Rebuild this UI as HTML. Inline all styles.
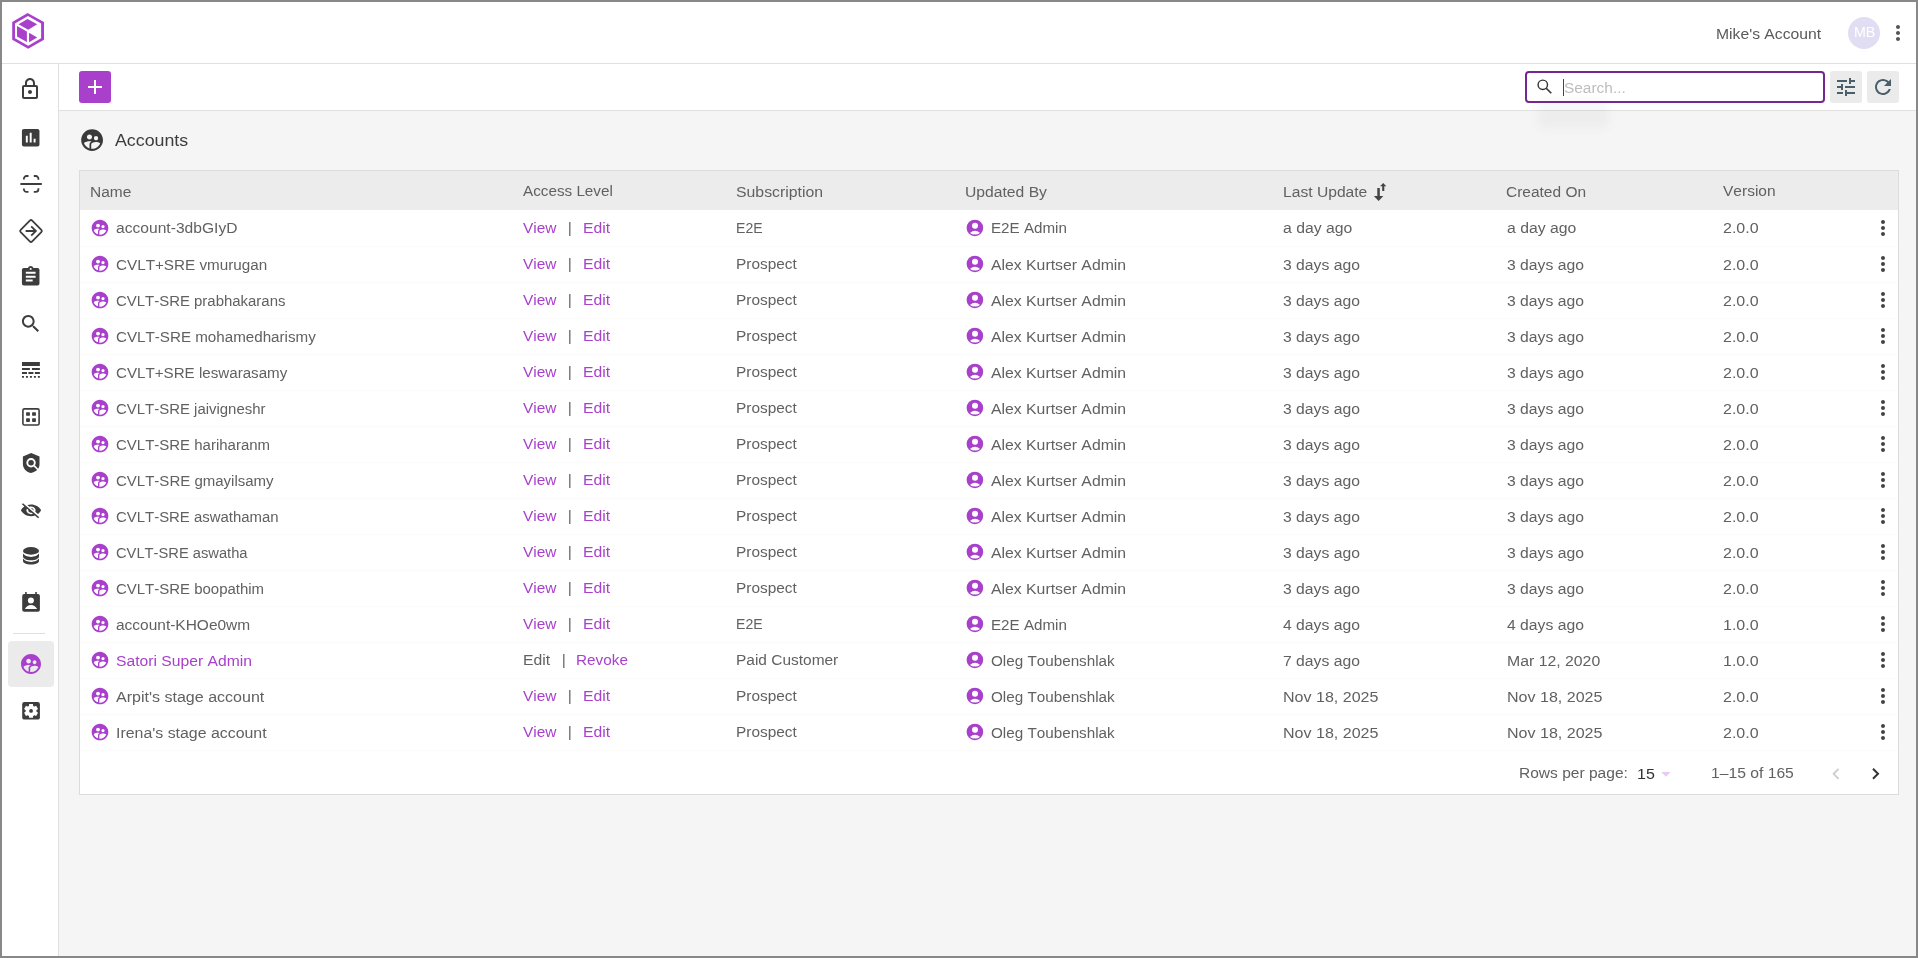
<!DOCTYPE html>
<html><head><meta charset="utf-8"><title>Accounts</title>
<style>
html,body{margin:0;padding:0;width:1918px;height:958px;overflow:hidden;background:#888;}
body{position:relative;font-family:"Liberation Sans",sans-serif;}
.box{position:absolute;}
.t{position:absolute;white-space:nowrap;transform-origin:0 0;will-change:transform;font-kerning:none;font-feature-settings:"kern" 0;}
.ic{position:absolute;overflow:visible;}
</style></head><body>
<div class="box" style="left:0;top:0;width:1918px;height:958px;background:#888"></div>
<div class="box" style="left:2px;top:2px;width:1914px;height:954px;background:#f5f5f5"></div>
<div class="box" style="left:2px;top:2px;width:1914px;height:61px;background:#fff"></div>
<div class="box" style="left:2px;top:63px;width:1914px;height:1px;background:#e0e0e0"></div>
<div class="box" style="left:2px;top:64px;width:56px;height:892px;background:#fff"></div>
<div class="box" style="left:58px;top:64px;width:1px;height:892px;background:#e0e0e0"></div>
<div class="box" style="left:59px;top:64px;width:1857px;height:46px;background:#fff"></div>
<div class="box" style="left:59px;top:110px;width:1857px;height:1px;background:#e0e0e0"></div>
<svg class="ic" style="left:8px;top:10px;width:40px;height:42px;" viewBox="8 10 40 42"><path fill="#a940cc" fill-rule="evenodd" d="M27.6 13.1 L44 22.1 L44 39.8 L28.2 48.8 L12.2 39.8 L12.2 22.1 Z M28 16.1 L41.1 23.6 L41.1 38.3 L28.2 45.7 L15 38.3 L15 23.6 Z"/><path fill="#a940cc" d="M18.5 24.3 L27.5 19 L37.2 24.3 L28.2 29.7 Z M17 26 L26.9 31.5 L26.9 42 L17 36.5 Z M29.05 32.8 L37.2 37.4 L29.05 42.2 Z"/></svg>
<div class="t" style="left:1716.00px;top:26.65px;font-size:14px;line-height:14px;color:#5a5a5a;transform:scaleX(1.1211);">Mike's Account</div>
<div class="box" style="left:1848px;top:17px;width:32px;height:32px;border-radius:50%;background:#e1def3"></div>
<div class="t" style="left:1853.60px;top:26.32px;font-size:13.8px;line-height:13.8px;color:#ffffff;transform:scaleX(1.0326);">MB</div>
<svg class="ic" style="left:1886px;top:21px;width:24px;height:24px;" viewBox="0 0 24 24"><path fill="#555" d="M12 8c1.1 0 2-.9 2-2s-.9-2-2-2-2 .9-2 2 .9 2 2 2zm0 2c-1.1 0-2 .9-2 2s.9 2 2 2 2-.9 2-2-.9-2-2-2zm0 6c-1.1 0-2 .9-2 2s.9 2 2 2 2-.9 2-2-.9-2-2-2z"/></svg>
<svg class="ic" style="left:18.2px;top:77.2px;width:24px;height:24px;" viewBox="0 0 24 24"><path fill="#3d3d3d" d="M18 8h-1V6c0-2.76-2.24-5-5-5S7 3.24 7 6v2H6c-1.1 0-2 .9-2 2v10c0 1.1.9 2 2 2h12c1.1 0 2-.9 2-2V10c0-1.1-.9-2-2-2zM9 6c0-1.66 1.34-3 3-3s3 1.34 3 3v2H9V6zm9 14H6V10h12v10zm-6-3c1.1 0 2-.9 2-2s-.9-2-2-2-2 .9-2 2 .9 2 2 2z"/></svg>
<svg class="ic" style="left:19.3px;top:126.3px;width:23.4px;height:23.4px;" viewBox="0 0 24 24"><path fill="#3d3d3d" d="M19 3H5c-1.1 0-2 .9-2 2v14c0 1.1.9 2 2 2h14c1.1 0 2-.9 2-2V5c0-1.1-.9-2-2-2zM9 17H7v-7h2v7zm4 0h-2V7h2v10zm4 0h-2v-4h2v4z"/></svg>
<svg class="ic" style="left:16px;top:170px;width:30px;height:30px;" viewBox="16 170 30 30"><g fill="none" stroke="#3d3d3d" stroke-width="1.8"><path d="M23.9 179.4 V178.6 a2.6 2.6 0 0 1 2.6 -2.6 H28.5"/><path d="M33.8 176 H35.8 a2.6 2.6 0 0 1 2.6 2.6 V179.8"/><path d="M23.9 188.5 V189.2 a2.6 2.6 0 0 0 2.6 2.6 H28.5"/><path d="M33.8 191.8 H35.8 a2.6 2.6 0 0 0 2.6 -2.6 V188.2"/></g><path d="M21.2 184 H41" stroke="#3d3d3d" stroke-width="2.1" stroke-linecap="round"/></svg>
<svg class="ic" style="left:16px;top:216px;width:30px;height:30px;" viewBox="16 216 30 30"><rect x="-8.15" y="-8.15" width="16.3" height="16.3" rx="1.7" fill="none" stroke="#3d3d3d" stroke-width="1.8" transform="translate(31 231) rotate(45)"/><g fill="none" stroke="#3d3d3d" stroke-width="1.8" stroke-linejoin="miter"><path d="M25.6 231 H35.4 M31.2 226.3 L35.9 231 L31.2 235.7"/></g></svg>
<svg class="ic" style="left:19.3px;top:265.2px;width:23.4px;height:23.4px;" viewBox="0 0 24 24"><path fill="#3d3d3d" d="M19 3h-4.18C14.4 1.84 13.3 1 12 1c-1.3 0-2.4.84-2.82 2H5c-1.1 0-2 .9-2 2v14c0 1.1.9 2 2 2h14c1.1 0 2-.9 2-2V5c0-1.1-.9-2-2-2zm-7 0c.55 0 1 .45 1 1s-.45 1-1 1-1-.45-1-1 .45-1 1-1zm2 14H7v-2h7v2zm3-4H7v-2h10v2zm0-4H7V7h10v2z"/></svg>
<svg class="ic" style="left:19.17px;top:312.1px;width:23.45px;height:23.45px;" viewBox="0 0 24 24"><path fill="#3d3d3d" d="M15.5 14h-.79l-.28-.27C15.41 12.59 16 11.11 16 9.5 16 5.91 13.09 3 9.5 3S3 5.91 3 9.5 5.91 16 9.5 16c1.61 0 3.09-.59 4.23-1.57l.27.28v.79l5 4.99L20.49 19l-4.99-5zm-6 0C7.01 14 5 11.99 5 9.5S7.01 5 9.5 5 14 7.01 14 9.5 11.99 14 9.5 14z"/></svg>
<svg class="ic" style="left:19.1px;top:358px;width:23.85px;height:23.85px;" viewBox="0 0 24 24"><path fill="#3d3d3d" d="M3 16h5v-2H3v2zm6.5 0h5v-2h-5v2zm6.5 0h5v-2h-5v2zM3 20h2v-2H3v2zm4 0h2v-2H7v2zm4 0h2v-2h-2v2zm4 0h2v-2h-2v2zm4 0h2v-2h-2v2zM3 12h8v-2H3v2zm10 0h8v-2h-8v2zM3 4v4h18V4H3z"/></svg>
<svg class="ic" style="left:16px;top:402px;width:30px;height:30px;" viewBox="16 402 30 30"><rect x="22.9" y="408.9" width="16.2" height="16.1" rx="1.6" fill="none" stroke="#3d3d3d" stroke-width="1.6"/><g fill="#3d3d3d"><rect x="26.1" y="412.2" width="3.8" height="3.6" rx=".6"/><rect x="32.1" y="412.2" width="3.8" height="3.6" rx=".6"/><rect x="26.1" y="418.2" width="3.8" height="3.7" rx=".6"/><rect x="32.1" y="418.2" width="3.8" height="3.7" rx=".6"/></g></svg>
<svg class="ic" style="left:16px;top:448px;width:30px;height:30px;" viewBox="16 448 30 30"><path fill="#3d3d3d" d="M31.2 453 L39.5 456.6 V464.5 C39.5 468.6 36 472 30.8 473 C25.8 472 22.9 468 22.9 464 V456.6 Z"/><circle cx="31.05" cy="462.75" r="3.75" fill="none" stroke="#fff" stroke-width="1.9"/><path d="M34 465.6 L38.6 470.2" stroke="#fff" stroke-width="1.6"/></svg>
<svg class="ic" style="left:19.98px;top:501.1px;width:22.03px;height:18.72px" viewBox="0 0 24 24" preserveAspectRatio="none"><path fill="#3d3d3d" d="M12 7c2.76 0 5 2.24 5 5 0 .65-.13 1.26-.36 1.83l2.92 2.92c1.51-1.26 2.7-2.89 3.43-4.75-1.730-4.39-6-7.5-11-7.5-1.4 0-2.74.25-3.98.7l2.160 2.16C10.74 7.13 11.35 7 12 7zM2 4.27l2.28 2.28.46.46C3.08 8.3 1.78 10.02 1 12c1.73 4.39 6 7.5 11 7.5 1.55 0 3.03-.3 4.38-.84l.42.42L19.73 22 21 20.73 3.27 3 2 4.27zM7.53 9.8l1.55 1.55c-.05.21-.08.43-.08.65 0 1.66 1.34 3 3 3 .22 0 .44-.03.65-.08l1.55 1.55c-.67.33-1.41.53-2.2.53-2.76 0-5-2.24-5-5 0-.79.2-1.53.53-2.2zm4.31-.78l3.15 3.15.02-.16c0-1.66-1.340-3-3-3l-.17.01z"/></svg>
<svg class="ic" style="left:16px;top:541px;width:30px;height:30px;" viewBox="16 541 30 30"><g fill="#3d3d3d"><ellipse cx="31" cy="550.9" rx="8" ry="3.8"/><path d="M23 553.6 C24.2 555.6 27.3 556.9 31 556.9 C34.7 556.9 37.8 555.6 39 553.6 V556.4 C39 558.4 35.4 560.2 31 560.2 C26.6 560.2 23 558.4 23 556.4 Z"/><path d="M23 558.6 C24.2 560.6 27.3 561.9 31 561.9 C34.7 561.9 37.8 560.6 39 558.6 V561 C39 563 35.4 564.6 31 564.6 C26.6 564.6 23 563 23 561 Z"/></g></svg>
<svg class="ic" style="left:16px;top:587px;width:30px;height:30px;" viewBox="16 587 30 30"><path fill="#3d3d3d" fill-rule="evenodd" d="M24.2 593.9 H37.9 A2 2 0 0 1 39.9 595.9 V609.7 A2 2 0 0 1 37.9 611.7 H24.2 A2 2 0 0 1 22.2 609.7 V595.9 A2 2 0 0 1 24.2 593.9 Z M24.9 609.1 H37.1 C36.1 606.5 33.8 604.9 31 604.9 C28.2 604.9 25.9 606.5 24.9 609.1 Z"/><rect x="25.1" y="592" width="1.6" height="2.5" fill="#3d3d3d"/><rect x="35.2" y="592" width="1.6" height="2.5" fill="#3d3d3d"/><circle cx="30.9" cy="600.4" r="3" fill="#fff"/></svg>
<div class="box" style="left:13px;top:633px;width:32px;height:1px;background:#e0e0e0"></div>
<div class="box" style="left:8px;top:641px;width:46px;height:46px;border-radius:4px;background:#ebebeb"></div>
<svg class="ic" style="left:19px;top:652px;width:24px;height:24px;" viewBox="0 0 24 24"><path fill="#a940cc" d="M12 2C6.48 2 2 6.48 2 12s4.48 10 10 10 10-4.48 10-10S17.52 2 12 2zm3.61 6.34c1.07 0 1.93.86 1.93 1.93 0 1.07-.86 1.93-1.93 1.93-1.07 0-1.93-.86-1.930-1.93-.01-1.07.86-1.93 1.93-1.93zm-6-1.58c1.3 0 2.36 1.06 2.36 2.36 0 1.3-1.06 2.36-2.36 2.36s-2.36-1.06-2.36-2.36c0-1.31 1.05-2.36 2.36-2.36zm0 9.13v3.75c-2.4-.75-4.3-2.6-5.14-4.96 1.05-1.12 3.670-1.69 5.14-1.69.53 0 1.2.08 1.9.22-1.64.87-1.9 2.02-1.9 2.68zM12 20c-.27 0-.53-.01-.79-.04v-4.07c0-1.42 2.94-2.13 4.4-2.13 1.07 0 2.92.39 3.84 1.15-1.17 2.92-4.01 5.09-7.450 5.09z"/></svg>
<svg class="ic" style="left:16px;top:696px;width:30px;height:30px;" viewBox="16 696 30 30"><rect x="22.2" y="702.1" width="17.7" height="17.5" rx="2.2" fill="#3d3d3d"/><g transform="translate(31.05 710.9)" fill="#fff"><circle r="5.4"/><path d="M-1.9 -6.95 H1.9 L2.2 -4 H-2.2 Z"/><path d="M-1.9 -6.95 H1.9 L2.2 -4 H-2.2 Z" transform="rotate(60)"/><path d="M-1.9 -6.95 H1.9 L2.2 -4 H-2.2 Z" transform="rotate(120)"/><path d="M-1.9 -6.95 H1.9 L2.2 -4 H-2.2 Z" transform="rotate(180)"/><path d="M-1.9 -6.95 H1.9 L2.2 -4 H-2.2 Z" transform="rotate(240)"/><path d="M-1.9 -6.95 H1.9 L2.2 -4 H-2.2 Z" transform="rotate(300)"/><circle r="1.9" fill="#3d3d3d"/></g></svg>
<div class="box" style="left:79px;top:71px;width:32px;height:32px;border-radius:3px;background:#a940cc"></div>
<div class="box" style="left:87.8px;top:86.1px;width:14px;height:1.8px;background:#fff"></div>
<div class="box" style="left:93.9px;top:80px;width:1.8px;height:14px;background:#fff"></div>
<div class="box" style="left:1525px;top:71px;width:300px;height:32px;box-sizing:border-box;border:2px solid #76278f;border-radius:4px;background:#fff"></div>
<svg class="ic" style="left:1530px;top:74px;width:30px;height:26px;" viewBox="1530 74 30 26"><circle cx="1542.8" cy="84.8" r="4.7" fill="none" stroke="#333" stroke-width="1.4"/><path d="M1546.2 88.2 L1551.3 93.3" stroke="#333" stroke-width="1.6"/></svg>
<div class="box" style="left:1563px;top:79px;width:1px;height:17px;background:#444"></div>
<div class="t" style="left:1564.00px;top:81.15px;font-size:14px;line-height:14px;color:#bdbdbd;transform:scaleX(1.1022);">Search...</div>
<div class="box" style="left:1538px;top:100px;width:70px;height:28px;background:rgba(0,0,0,0.03);filter:blur(5px)"></div>
<div class="box" style="left:1830px;top:71px;width:32px;height:32px;border-radius:3px;background:#ebebeb"></div>
<svg class="ic" style="left:1834px;top:75px;width:24px;height:24px;" viewBox="0 0 24 24"><path fill="#4a5f6a" d="M3 17v2h6v-2H3zM3 5v2h10V5H3zm10 16v-2h8v-2h-8v-2h-2v6h2zM7 9v2H3v2h4v2h2V9H7zm14 4v-2H11v2h10zm-6-4h2V7h4V5h-4V3h-2v6z"/></svg>
<div class="box" style="left:1867px;top:71px;width:32px;height:32px;border-radius:3px;background:#ebebeb"></div>
<svg class="ic" style="left:1871px;top:75px;width:24px;height:24px;" viewBox="0 0 24 24"><path fill="#4a5f6a" d="M17.65 6.35C16.2 4.9 14.21 4 12 4c-4.42 0-7.99 3.58-7.99 8s3.57 8 7.99 8c3.73 0 6.84-2.55 7.73-6h-2.08c-.82 2.33-3.04 4-5.65 4-3.31 0-6-2.69-6-6s2.69-6 6-6c1.66 0 3.14.69 4.22 1.78L13 11h7V4l-2.35 2.35z"/></svg>
<svg class="ic" style="left:78.8px;top:126.8px;width:26.2px;height:26.2px;" viewBox="0 0 24 24"><path fill="#3a3a3a" d="M12 2C6.48 2 2 6.48 2 12s4.48 10 10 10 10-4.48 10-10S17.52 2 12 2zm3.61 6.34c1.07 0 1.93.86 1.93 1.93 0 1.07-.86 1.93-1.93 1.93-1.07 0-1.93-.86-1.930-1.93-.01-1.07.86-1.93 1.93-1.93zm-6-1.58c1.3 0 2.36 1.06 2.36 2.36 0 1.3-1.06 2.36-2.36 2.36s-2.36-1.06-2.36-2.36c0-1.31 1.05-2.36 2.36-2.36zm0 9.13v3.75c-2.4-.75-4.3-2.6-5.14-4.96 1.05-1.12 3.670-1.69 5.14-1.69.53 0 1.2.08 1.9.22-1.64.87-1.9 2.02-1.9 2.68zM12 20c-.27 0-.53-.01-.79-.04v-4.07c0-1.42 2.94-2.13 4.4-2.13 1.07 0 2.92.39 3.84 1.15-1.17 2.92-4.01 5.09-7.450 5.09z"/></svg>
<div class="t" style="left:115.00px;top:133.46px;font-size:16px;line-height:16px;color:#3c3c3c;transform:scaleX(1.1125);">Accounts</div>
<div class="box" style="left:79px;top:170px;width:1820px;height:625px;box-sizing:border-box;border:1px solid #dcdcdc;background:#fff"></div>
<div class="box" style="left:80px;top:171px;width:1818px;height:39px;background:#ececec"></div>
<div class="t" style="left:89.60px;top:185.15px;font-size:14px;line-height:14px;color:#616161;transform:scaleX(1.1060);">Name</div>
<div class="t" style="left:523.00px;top:184.15px;font-size:14px;line-height:14px;color:#616161;transform:scaleX(1.0890);">Access Level</div>
<div class="t" style="left:735.50px;top:185.15px;font-size:14px;line-height:14px;color:#616161;transform:scaleX(1.1291);">Subscription</div>
<div class="t" style="left:964.50px;top:185.15px;font-size:14px;line-height:14px;color:#616161;transform:scaleX(1.1199);">Updated By</div>
<div class="t" style="left:1282.50px;top:185.15px;font-size:14px;line-height:14px;color:#616161;transform:scaleX(1.1168);">Last Update</div>
<div class="t" style="left:1506.00px;top:185.15px;font-size:14px;line-height:14px;color:#616161;transform:scaleX(1.1062);">Created On</div>
<div class="t" style="left:1723.00px;top:184.15px;font-size:14px;line-height:14px;color:#616161;transform:scaleX(1.1074);">Version</div>
<svg class="ic" style="left:1370px;top:180px;width:20px;height:24px;" viewBox="1370 180 20 24"><g fill="#444"><rect x="1377.3" y="188" width="2.5" height="8.5"/><path d="M1373.9 196 H1383.3 L1378.6 201 Z"/><rect x="1382.2" y="186" width="2.1" height="5"/><path d="M1380.1 186.3 H1386.3 L1383.2 183 Z"/></g></svg>
<div class="box" style="left:80px;top:246px;width:1818px;height:1px;background:#fafafa"></div>
<svg class="ic" style="left:89.9px;top:218px;width:20px;height:20px;" viewBox="0 0 24 24"><path fill="#a940cc" d="M12 2C6.48 2 2 6.48 2 12s4.48 10 10 10 10-4.48 10-10S17.52 2 12 2zm3.61 6.34c1.07 0 1.93.86 1.93 1.93 0 1.07-.86 1.93-1.93 1.93-1.07 0-1.93-.86-1.930-1.93-.01-1.07.86-1.93 1.93-1.93zm-6-1.58c1.3 0 2.36 1.06 2.36 2.36 0 1.3-1.06 2.36-2.36 2.36s-2.36-1.06-2.36-2.36c0-1.31 1.05-2.36 2.36-2.36zm0 9.13v3.75c-2.4-.75-4.3-2.6-5.14-4.96 1.05-1.12 3.670-1.69 5.14-1.69.53 0 1.2.08 1.9.22-1.64.87-1.9 2.02-1.9 2.68zM12 20c-.27 0-.53-.01-.79-.04v-4.07c0-1.42 2.94-2.13 4.4-2.13 1.07 0 2.92.39 3.84 1.15-1.17 2.92-4.01 5.09-7.450 5.09z"/></svg>
<div class="t" style="left:115.50px;top:221.15px;font-size:14px;line-height:14px;color:#616161;transform:scaleX(1.1157);">account-3dbGIyD</div>
<div class="t" style="left:523.20px;top:221.15px;font-size:14px;line-height:14px;color:#a940cc;transform:scaleX(1.1050);">View</div>
<div class="t" style="left:568.00px;top:221.15px;font-size:14px;line-height:14px;color:#555;transform:scaleX(1.0000);">|</div>
<div class="t" style="left:582.60px;top:221.15px;font-size:14px;line-height:14px;color:#a940cc;transform:scaleX(1.1238);">Edit</div>
<div class="t" style="left:735.50px;top:221.15px;font-size:14px;line-height:14px;color:#616161;transform:scaleX(1.0052);">E2E</div>
<svg class="ic" style="left:964px;top:218px;width:22px;height:22px" viewBox="964 218 22 22"><circle cx="974.9" cy="227.95" r="8.3" fill="#a940cc"/><circle cx="975" cy="225.8" r="3" fill="#fff"/><path d="M969.9 232.9 Q975 228.6 980.05 232.9 Q975 236.2 969.9 232.9 Z" fill="#fff"/></svg>
<div class="t" style="left:990.50px;top:221.15px;font-size:14px;line-height:14px;color:#616161;transform:scaleX(1.0839);">E2E Admin</div>
<div class="t" style="left:1282.50px;top:221.15px;font-size:14px;line-height:14px;color:#616161;transform:scaleX(1.1263);">a day ago</div>
<div class="t" style="left:1506.80px;top:221.15px;font-size:14px;line-height:14px;color:#616161;transform:scaleX(1.1263);">a day ago</div>
<div class="t" style="left:1722.50px;top:221.15px;font-size:14px;line-height:14px;color:#616161;transform:scaleX(1.1440);">2.0.0</div>
<svg class="ic" style="left:1871px;top:216px;width:24px;height:24px;" viewBox="0 0 24 24"><path fill="#444" d="M12 8c1.1 0 2-.9 2-2s-.9-2-2-2-2 .9-2 2 .9 2 2 2zm0 2c-1.1 0-2 .9-2 2s.9 2 2 2 2-.9 2-2-.9-2-2-2zm0 6c-1.1 0-2 .9-2 2s.9 2 2 2 2-.9 2-2-.9-2-2-2z"/></svg>
<div class="box" style="left:80px;top:282px;width:1818px;height:1px;background:#fafafa"></div>
<svg class="ic" style="left:89.9px;top:254px;width:20px;height:20px;" viewBox="0 0 24 24"><path fill="#a940cc" d="M12 2C6.48 2 2 6.48 2 12s4.48 10 10 10 10-4.48 10-10S17.52 2 12 2zm3.61 6.34c1.07 0 1.93.86 1.93 1.93 0 1.07-.86 1.93-1.93 1.93-1.07 0-1.93-.86-1.930-1.93-.01-1.07.86-1.93 1.93-1.93zm-6-1.58c1.3 0 2.36 1.06 2.36 2.36 0 1.3-1.06 2.36-2.36 2.36s-2.36-1.06-2.36-2.36c0-1.31 1.05-2.36 2.36-2.36zm0 9.13v3.75c-2.4-.75-4.3-2.6-5.14-4.96 1.05-1.12 3.670-1.69 5.14-1.69.53 0 1.2.08 1.9.22-1.64.87-1.9 2.02-1.9 2.68zM12 20c-.27 0-.53-.01-.79-.04v-4.07c0-1.42 2.94-2.13 4.4-2.13 1.07 0 2.92.39 3.84 1.15-1.17 2.92-4.01 5.09-7.450 5.09z"/></svg>
<div class="t" style="left:115.50px;top:258.15px;font-size:14px;line-height:14px;color:#616161;transform:scaleX(1.0880);">CVLT+SRE vmurugan</div>
<div class="t" style="left:523.20px;top:257.15px;font-size:14px;line-height:14px;color:#a940cc;transform:scaleX(1.1050);">View</div>
<div class="t" style="left:568.00px;top:257.15px;font-size:14px;line-height:14px;color:#555;transform:scaleX(1.0000);">|</div>
<div class="t" style="left:582.60px;top:257.15px;font-size:14px;line-height:14px;color:#a940cc;transform:scaleX(1.1238);">Edit</div>
<div class="t" style="left:735.50px;top:257.15px;font-size:14px;line-height:14px;color:#616161;transform:scaleX(1.0995);">Prospect</div>
<svg class="ic" style="left:964px;top:254px;width:22px;height:22px" viewBox="964 254 22 22"><circle cx="974.9" cy="263.95" r="8.3" fill="#a940cc"/><circle cx="975" cy="261.8" r="3" fill="#fff"/><path d="M969.9 268.9 Q975 264.6 980.05 268.9 Q975 272.2 969.9 268.9 Z" fill="#fff"/></svg>
<div class="t" style="left:990.50px;top:258.15px;font-size:14px;line-height:14px;color:#616161;transform:scaleX(1.1275);">Alex Kurtser Admin</div>
<div class="t" style="left:1282.50px;top:258.15px;font-size:14px;line-height:14px;color:#616161;transform:scaleX(1.1225);">3 days ago</div>
<div class="t" style="left:1506.80px;top:258.15px;font-size:14px;line-height:14px;color:#616161;transform:scaleX(1.1225);">3 days ago</div>
<div class="t" style="left:1722.50px;top:258.15px;font-size:14px;line-height:14px;color:#616161;transform:scaleX(1.1440);">2.0.0</div>
<svg class="ic" style="left:1871px;top:252px;width:24px;height:24px;" viewBox="0 0 24 24"><path fill="#444" d="M12 8c1.1 0 2-.9 2-2s-.9-2-2-2-2 .9-2 2 .9 2 2 2zm0 2c-1.1 0-2 .9-2 2s.9 2 2 2 2-.9 2-2-.9-2-2-2zm0 6c-1.1 0-2 .9-2 2s.9 2 2 2 2-.9 2-2-.9-2-2-2z"/></svg>
<div class="box" style="left:80px;top:318px;width:1818px;height:1px;background:#fafafa"></div>
<svg class="ic" style="left:89.9px;top:290px;width:20px;height:20px;" viewBox="0 0 24 24"><path fill="#a940cc" d="M12 2C6.48 2 2 6.48 2 12s4.48 10 10 10 10-4.48 10-10S17.52 2 12 2zm3.61 6.34c1.07 0 1.93.86 1.93 1.93 0 1.07-.86 1.93-1.93 1.93-1.07 0-1.93-.86-1.930-1.93-.01-1.07.86-1.93 1.93-1.93zm-6-1.58c1.3 0 2.36 1.06 2.36 2.36 0 1.3-1.06 2.36-2.36 2.36s-2.36-1.06-2.36-2.36c0-1.31 1.05-2.36 2.36-2.36zm0 9.13v3.75c-2.4-.75-4.3-2.6-5.14-4.96 1.05-1.12 3.670-1.69 5.14-1.69.53 0 1.2.08 1.9.22-1.64.87-1.9 2.02-1.9 2.68zM12 20c-.27 0-.53-.01-.79-.04v-4.07c0-1.42 2.94-2.13 4.4-2.13 1.07 0 2.92.39 3.84 1.15-1.17 2.92-4.01 5.09-7.450 5.09z"/></svg>
<div class="t" style="left:115.50px;top:294.15px;font-size:14px;line-height:14px;color:#616161;transform:scaleX(1.0673);">CVLT-SRE prabhakarans</div>
<div class="t" style="left:523.20px;top:293.15px;font-size:14px;line-height:14px;color:#a940cc;transform:scaleX(1.1050);">View</div>
<div class="t" style="left:568.00px;top:293.15px;font-size:14px;line-height:14px;color:#555;transform:scaleX(1.0000);">|</div>
<div class="t" style="left:582.60px;top:293.15px;font-size:14px;line-height:14px;color:#a940cc;transform:scaleX(1.1238);">Edit</div>
<div class="t" style="left:735.50px;top:293.15px;font-size:14px;line-height:14px;color:#616161;transform:scaleX(1.0995);">Prospect</div>
<svg class="ic" style="left:964px;top:290px;width:22px;height:22px" viewBox="964 290 22 22"><circle cx="974.9" cy="299.95" r="8.3" fill="#a940cc"/><circle cx="975" cy="297.8" r="3" fill="#fff"/><path d="M969.9 304.9 Q975 300.6 980.05 304.9 Q975 308.2 969.9 304.9 Z" fill="#fff"/></svg>
<div class="t" style="left:990.50px;top:294.15px;font-size:14px;line-height:14px;color:#616161;transform:scaleX(1.1275);">Alex Kurtser Admin</div>
<div class="t" style="left:1282.50px;top:294.15px;font-size:14px;line-height:14px;color:#616161;transform:scaleX(1.1225);">3 days ago</div>
<div class="t" style="left:1506.80px;top:294.15px;font-size:14px;line-height:14px;color:#616161;transform:scaleX(1.1225);">3 days ago</div>
<div class="t" style="left:1722.50px;top:294.15px;font-size:14px;line-height:14px;color:#616161;transform:scaleX(1.1440);">2.0.0</div>
<svg class="ic" style="left:1871px;top:288px;width:24px;height:24px;" viewBox="0 0 24 24"><path fill="#444" d="M12 8c1.1 0 2-.9 2-2s-.9-2-2-2-2 .9-2 2 .9 2 2 2zm0 2c-1.1 0-2 .9-2 2s.9 2 2 2 2-.9 2-2-.9-2-2-2zm0 6c-1.1 0-2 .9-2 2s.9 2 2 2 2-.9 2-2-.9-2-2-2z"/></svg>
<div class="box" style="left:80px;top:354px;width:1818px;height:1px;background:#fafafa"></div>
<svg class="ic" style="left:89.9px;top:326px;width:20px;height:20px;" viewBox="0 0 24 24"><path fill="#a940cc" d="M12 2C6.48 2 2 6.48 2 12s4.48 10 10 10 10-4.48 10-10S17.52 2 12 2zm3.61 6.34c1.07 0 1.93.86 1.93 1.93 0 1.07-.86 1.93-1.93 1.93-1.07 0-1.93-.86-1.930-1.93-.01-1.07.86-1.93 1.93-1.93zm-6-1.58c1.3 0 2.36 1.06 2.36 2.36 0 1.3-1.06 2.36-2.36 2.36s-2.36-1.06-2.36-2.36c0-1.31 1.05-2.36 2.36-2.36zm0 9.13v3.75c-2.4-.75-4.3-2.6-5.14-4.96 1.05-1.12 3.670-1.69 5.14-1.69.53 0 1.2.08 1.9.22-1.64.87-1.9 2.02-1.9 2.68zM12 20c-.27 0-.53-.01-.79-.04v-4.07c0-1.42 2.94-2.13 4.4-2.13 1.07 0 2.92.39 3.84 1.15-1.17 2.92-4.01 5.09-7.450 5.09z"/></svg>
<div class="t" style="left:115.50px;top:330.15px;font-size:14px;line-height:14px;color:#616161;transform:scaleX(1.0835);">CVLT-SRE mohamedharismy</div>
<div class="t" style="left:523.20px;top:329.15px;font-size:14px;line-height:14px;color:#a940cc;transform:scaleX(1.1050);">View</div>
<div class="t" style="left:568.00px;top:329.15px;font-size:14px;line-height:14px;color:#555;transform:scaleX(1.0000);">|</div>
<div class="t" style="left:582.60px;top:329.15px;font-size:14px;line-height:14px;color:#a940cc;transform:scaleX(1.1238);">Edit</div>
<div class="t" style="left:735.50px;top:329.15px;font-size:14px;line-height:14px;color:#616161;transform:scaleX(1.0995);">Prospect</div>
<svg class="ic" style="left:964px;top:326px;width:22px;height:22px" viewBox="964 326 22 22"><circle cx="974.9" cy="335.95" r="8.3" fill="#a940cc"/><circle cx="975" cy="333.8" r="3" fill="#fff"/><path d="M969.9 340.9 Q975 336.6 980.05 340.9 Q975 344.2 969.9 340.9 Z" fill="#fff"/></svg>
<div class="t" style="left:990.50px;top:330.15px;font-size:14px;line-height:14px;color:#616161;transform:scaleX(1.1275);">Alex Kurtser Admin</div>
<div class="t" style="left:1282.50px;top:330.15px;font-size:14px;line-height:14px;color:#616161;transform:scaleX(1.1225);">3 days ago</div>
<div class="t" style="left:1506.80px;top:330.15px;font-size:14px;line-height:14px;color:#616161;transform:scaleX(1.1225);">3 days ago</div>
<div class="t" style="left:1722.50px;top:330.15px;font-size:14px;line-height:14px;color:#616161;transform:scaleX(1.1440);">2.0.0</div>
<svg class="ic" style="left:1871px;top:324px;width:24px;height:24px;" viewBox="0 0 24 24"><path fill="#444" d="M12 8c1.1 0 2-.9 2-2s-.9-2-2-2-2 .9-2 2 .9 2 2 2zm0 2c-1.1 0-2 .9-2 2s.9 2 2 2 2-.9 2-2-.9-2-2-2zm0 6c-1.1 0-2 .9-2 2s.9 2 2 2 2-.9 2-2-.9-2-2-2z"/></svg>
<div class="box" style="left:80px;top:390px;width:1818px;height:1px;background:#fafafa"></div>
<svg class="ic" style="left:89.9px;top:362px;width:20px;height:20px;" viewBox="0 0 24 24"><path fill="#a940cc" d="M12 2C6.48 2 2 6.48 2 12s4.48 10 10 10 10-4.48 10-10S17.52 2 12 2zm3.61 6.34c1.07 0 1.93.86 1.93 1.93 0 1.07-.86 1.93-1.93 1.93-1.07 0-1.93-.86-1.930-1.93-.01-1.07.86-1.93 1.93-1.93zm-6-1.58c1.3 0 2.36 1.06 2.36 2.36 0 1.3-1.06 2.36-2.36 2.36s-2.36-1.06-2.36-2.36c0-1.31 1.05-2.36 2.36-2.36zm0 9.13v3.75c-2.4-.75-4.3-2.6-5.14-4.96 1.05-1.12 3.670-1.69 5.14-1.69.53 0 1.2.08 1.9.22-1.64.87-1.9 2.02-1.9 2.68zM12 20c-.27 0-.53-.01-.79-.04v-4.07c0-1.42 2.94-2.13 4.4-2.13 1.07 0 2.92.39 3.84 1.15-1.17 2.92-4.01 5.09-7.450 5.09z"/></svg>
<div class="t" style="left:115.50px;top:366.15px;font-size:14px;line-height:14px;color:#616161;transform:scaleX(1.0819);">CVLT+SRE leswarasamy</div>
<div class="t" style="left:523.20px;top:365.15px;font-size:14px;line-height:14px;color:#a940cc;transform:scaleX(1.1050);">View</div>
<div class="t" style="left:568.00px;top:365.15px;font-size:14px;line-height:14px;color:#555;transform:scaleX(1.0000);">|</div>
<div class="t" style="left:582.60px;top:365.15px;font-size:14px;line-height:14px;color:#a940cc;transform:scaleX(1.1238);">Edit</div>
<div class="t" style="left:735.50px;top:365.15px;font-size:14px;line-height:14px;color:#616161;transform:scaleX(1.0995);">Prospect</div>
<svg class="ic" style="left:964px;top:362px;width:22px;height:22px" viewBox="964 362 22 22"><circle cx="974.9" cy="371.95" r="8.3" fill="#a940cc"/><circle cx="975" cy="369.8" r="3" fill="#fff"/><path d="M969.9 376.9 Q975 372.6 980.05 376.9 Q975 380.2 969.9 376.9 Z" fill="#fff"/></svg>
<div class="t" style="left:990.50px;top:366.15px;font-size:14px;line-height:14px;color:#616161;transform:scaleX(1.1275);">Alex Kurtser Admin</div>
<div class="t" style="left:1282.50px;top:366.15px;font-size:14px;line-height:14px;color:#616161;transform:scaleX(1.1225);">3 days ago</div>
<div class="t" style="left:1506.80px;top:366.15px;font-size:14px;line-height:14px;color:#616161;transform:scaleX(1.1225);">3 days ago</div>
<div class="t" style="left:1722.50px;top:366.15px;font-size:14px;line-height:14px;color:#616161;transform:scaleX(1.1440);">2.0.0</div>
<svg class="ic" style="left:1871px;top:360px;width:24px;height:24px;" viewBox="0 0 24 24"><path fill="#444" d="M12 8c1.1 0 2-.9 2-2s-.9-2-2-2-2 .9-2 2 .9 2 2 2zm0 2c-1.1 0-2 .9-2 2s.9 2 2 2 2-.9 2-2-.9-2-2-2zm0 6c-1.1 0-2 .9-2 2s.9 2 2 2 2-.9 2-2-.9-2-2-2z"/></svg>
<div class="box" style="left:80px;top:426px;width:1818px;height:1px;background:#fafafa"></div>
<svg class="ic" style="left:89.9px;top:398px;width:20px;height:20px;" viewBox="0 0 24 24"><path fill="#a940cc" d="M12 2C6.48 2 2 6.48 2 12s4.48 10 10 10 10-4.48 10-10S17.52 2 12 2zm3.61 6.34c1.07 0 1.93.86 1.93 1.93 0 1.07-.86 1.93-1.93 1.93-1.07 0-1.93-.86-1.930-1.93-.01-1.07.86-1.93 1.93-1.93zm-6-1.58c1.3 0 2.36 1.06 2.36 2.36 0 1.3-1.06 2.36-2.36 2.36s-2.36-1.06-2.36-2.36c0-1.31 1.05-2.36 2.36-2.36zm0 9.13v3.75c-2.4-.75-4.3-2.6-5.14-4.96 1.05-1.12 3.670-1.69 5.14-1.69.53 0 1.2.08 1.9.22-1.64.87-1.9 2.02-1.9 2.68zM12 20c-.27 0-.53-.01-.79-.04v-4.07c0-1.42 2.94-2.13 4.4-2.13 1.07 0 2.92.39 3.84 1.15-1.17 2.92-4.01 5.09-7.450 5.09z"/></svg>
<div class="t" style="left:115.50px;top:402.15px;font-size:14px;line-height:14px;color:#616161;transform:scaleX(1.0675);">CVLT-SRE jaivigneshr</div>
<div class="t" style="left:523.20px;top:401.15px;font-size:14px;line-height:14px;color:#a940cc;transform:scaleX(1.1050);">View</div>
<div class="t" style="left:568.00px;top:401.15px;font-size:14px;line-height:14px;color:#555;transform:scaleX(1.0000);">|</div>
<div class="t" style="left:582.60px;top:401.15px;font-size:14px;line-height:14px;color:#a940cc;transform:scaleX(1.1238);">Edit</div>
<div class="t" style="left:735.50px;top:401.15px;font-size:14px;line-height:14px;color:#616161;transform:scaleX(1.0995);">Prospect</div>
<svg class="ic" style="left:964px;top:398px;width:22px;height:22px" viewBox="964 398 22 22"><circle cx="974.9" cy="407.95" r="8.3" fill="#a940cc"/><circle cx="975" cy="405.8" r="3" fill="#fff"/><path d="M969.9 412.9 Q975 408.6 980.05 412.9 Q975 416.2 969.9 412.9 Z" fill="#fff"/></svg>
<div class="t" style="left:990.50px;top:402.15px;font-size:14px;line-height:14px;color:#616161;transform:scaleX(1.1275);">Alex Kurtser Admin</div>
<div class="t" style="left:1282.50px;top:402.15px;font-size:14px;line-height:14px;color:#616161;transform:scaleX(1.1225);">3 days ago</div>
<div class="t" style="left:1506.80px;top:402.15px;font-size:14px;line-height:14px;color:#616161;transform:scaleX(1.1225);">3 days ago</div>
<div class="t" style="left:1722.50px;top:402.15px;font-size:14px;line-height:14px;color:#616161;transform:scaleX(1.1440);">2.0.0</div>
<svg class="ic" style="left:1871px;top:396px;width:24px;height:24px;" viewBox="0 0 24 24"><path fill="#444" d="M12 8c1.1 0 2-.9 2-2s-.9-2-2-2-2 .9-2 2 .9 2 2 2zm0 2c-1.1 0-2 .9-2 2s.9 2 2 2 2-.9 2-2-.9-2-2-2zm0 6c-1.1 0-2 .9-2 2s.9 2 2 2 2-.9 2-2-.9-2-2-2z"/></svg>
<div class="box" style="left:80px;top:462px;width:1818px;height:1px;background:#fafafa"></div>
<svg class="ic" style="left:89.9px;top:434px;width:20px;height:20px;" viewBox="0 0 24 24"><path fill="#a940cc" d="M12 2C6.48 2 2 6.48 2 12s4.48 10 10 10 10-4.48 10-10S17.52 2 12 2zm3.61 6.34c1.07 0 1.93.86 1.93 1.93 0 1.07-.86 1.93-1.93 1.93-1.07 0-1.93-.86-1.930-1.93-.01-1.07.86-1.93 1.93-1.93zm-6-1.58c1.3 0 2.36 1.06 2.36 2.36 0 1.3-1.06 2.36-2.36 2.36s-2.36-1.06-2.36-2.36c0-1.31 1.05-2.36 2.36-2.36zm0 9.13v3.75c-2.4-.75-4.3-2.6-5.14-4.96 1.05-1.12 3.670-1.69 5.14-1.69.53 0 1.2.08 1.9.22-1.64.87-1.9 2.02-1.9 2.68zM12 20c-.27 0-.53-.01-.79-.04v-4.07c0-1.42 2.94-2.13 4.4-2.13 1.07 0 2.92.39 3.84 1.15-1.17 2.92-4.01 5.09-7.450 5.09z"/></svg>
<div class="t" style="left:115.50px;top:438.15px;font-size:14px;line-height:14px;color:#616161;transform:scaleX(1.0703);">CVLT-SRE hariharanm</div>
<div class="t" style="left:523.20px;top:437.15px;font-size:14px;line-height:14px;color:#a940cc;transform:scaleX(1.1050);">View</div>
<div class="t" style="left:568.00px;top:437.15px;font-size:14px;line-height:14px;color:#555;transform:scaleX(1.0000);">|</div>
<div class="t" style="left:582.60px;top:437.15px;font-size:14px;line-height:14px;color:#a940cc;transform:scaleX(1.1238);">Edit</div>
<div class="t" style="left:735.50px;top:437.15px;font-size:14px;line-height:14px;color:#616161;transform:scaleX(1.0995);">Prospect</div>
<svg class="ic" style="left:964px;top:434px;width:22px;height:22px" viewBox="964 434 22 22"><circle cx="974.9" cy="443.95" r="8.3" fill="#a940cc"/><circle cx="975" cy="441.8" r="3" fill="#fff"/><path d="M969.9 448.9 Q975 444.6 980.05 448.9 Q975 452.2 969.9 448.9 Z" fill="#fff"/></svg>
<div class="t" style="left:990.50px;top:438.15px;font-size:14px;line-height:14px;color:#616161;transform:scaleX(1.1275);">Alex Kurtser Admin</div>
<div class="t" style="left:1282.50px;top:438.15px;font-size:14px;line-height:14px;color:#616161;transform:scaleX(1.1225);">3 days ago</div>
<div class="t" style="left:1506.80px;top:438.15px;font-size:14px;line-height:14px;color:#616161;transform:scaleX(1.1225);">3 days ago</div>
<div class="t" style="left:1722.50px;top:438.15px;font-size:14px;line-height:14px;color:#616161;transform:scaleX(1.1440);">2.0.0</div>
<svg class="ic" style="left:1871px;top:432px;width:24px;height:24px;" viewBox="0 0 24 24"><path fill="#444" d="M12 8c1.1 0 2-.9 2-2s-.9-2-2-2-2 .9-2 2 .9 2 2 2zm0 2c-1.1 0-2 .9-2 2s.9 2 2 2 2-.9 2-2-.9-2-2-2zm0 6c-1.1 0-2 .9-2 2s.9 2 2 2 2-.9 2-2-.9-2-2-2z"/></svg>
<div class="box" style="left:80px;top:498px;width:1818px;height:1px;background:#fafafa"></div>
<svg class="ic" style="left:89.9px;top:470px;width:20px;height:20px;" viewBox="0 0 24 24"><path fill="#a940cc" d="M12 2C6.48 2 2 6.48 2 12s4.48 10 10 10 10-4.48 10-10S17.52 2 12 2zm3.61 6.34c1.07 0 1.93.86 1.93 1.93 0 1.07-.86 1.93-1.93 1.93-1.07 0-1.93-.86-1.930-1.93-.01-1.07.86-1.93 1.93-1.93zm-6-1.58c1.3 0 2.36 1.06 2.36 2.36 0 1.3-1.06 2.36-2.36 2.36s-2.36-1.06-2.36-2.36c0-1.31 1.05-2.36 2.36-2.36zm0 9.13v3.75c-2.4-.75-4.3-2.6-5.14-4.96 1.05-1.12 3.670-1.69 5.14-1.69.53 0 1.2.08 1.9.22-1.64.87-1.9 2.02-1.9 2.68zM12 20c-.27 0-.53-.01-.79-.04v-4.07c0-1.42 2.94-2.13 4.4-2.13 1.07 0 2.92.39 3.84 1.15-1.17 2.92-4.01 5.09-7.450 5.09z"/></svg>
<div class="t" style="left:115.50px;top:474.15px;font-size:14px;line-height:14px;color:#616161;transform:scaleX(1.0721);">CVLT-SRE gmayilsamy</div>
<div class="t" style="left:523.20px;top:473.15px;font-size:14px;line-height:14px;color:#a940cc;transform:scaleX(1.1050);">View</div>
<div class="t" style="left:568.00px;top:473.15px;font-size:14px;line-height:14px;color:#555;transform:scaleX(1.0000);">|</div>
<div class="t" style="left:582.60px;top:473.15px;font-size:14px;line-height:14px;color:#a940cc;transform:scaleX(1.1238);">Edit</div>
<div class="t" style="left:735.50px;top:473.15px;font-size:14px;line-height:14px;color:#616161;transform:scaleX(1.0995);">Prospect</div>
<svg class="ic" style="left:964px;top:470px;width:22px;height:22px" viewBox="964 470 22 22"><circle cx="974.9" cy="479.95" r="8.3" fill="#a940cc"/><circle cx="975" cy="477.8" r="3" fill="#fff"/><path d="M969.9 484.9 Q975 480.6 980.05 484.9 Q975 488.2 969.9 484.9 Z" fill="#fff"/></svg>
<div class="t" style="left:990.50px;top:474.15px;font-size:14px;line-height:14px;color:#616161;transform:scaleX(1.1275);">Alex Kurtser Admin</div>
<div class="t" style="left:1282.50px;top:474.15px;font-size:14px;line-height:14px;color:#616161;transform:scaleX(1.1225);">3 days ago</div>
<div class="t" style="left:1506.80px;top:474.15px;font-size:14px;line-height:14px;color:#616161;transform:scaleX(1.1225);">3 days ago</div>
<div class="t" style="left:1722.50px;top:474.15px;font-size:14px;line-height:14px;color:#616161;transform:scaleX(1.1440);">2.0.0</div>
<svg class="ic" style="left:1871px;top:468px;width:24px;height:24px;" viewBox="0 0 24 24"><path fill="#444" d="M12 8c1.1 0 2-.9 2-2s-.9-2-2-2-2 .9-2 2 .9 2 2 2zm0 2c-1.1 0-2 .9-2 2s.9 2 2 2 2-.9 2-2-.9-2-2-2zm0 6c-1.1 0-2 .9-2 2s.9 2 2 2 2-.9 2-2-.9-2-2-2z"/></svg>
<div class="box" style="left:80px;top:534px;width:1818px;height:1px;background:#fafafa"></div>
<svg class="ic" style="left:89.9px;top:506px;width:20px;height:20px;" viewBox="0 0 24 24"><path fill="#a940cc" d="M12 2C6.48 2 2 6.48 2 12s4.48 10 10 10 10-4.48 10-10S17.52 2 12 2zm3.61 6.34c1.07 0 1.93.86 1.93 1.93 0 1.07-.86 1.93-1.93 1.93-1.07 0-1.93-.86-1.930-1.93-.01-1.07.86-1.93 1.93-1.93zm-6-1.58c1.3 0 2.36 1.06 2.36 2.36 0 1.3-1.06 2.36-2.36 2.36s-2.36-1.06-2.36-2.36c0-1.31 1.05-2.36 2.36-2.36zm0 9.13v3.75c-2.4-.75-4.3-2.6-5.14-4.96 1.05-1.12 3.670-1.69 5.14-1.69.53 0 1.2.08 1.9.22-1.64.87-1.9 2.02-1.9 2.68zM12 20c-.27 0-.53-.01-.79-.04v-4.07c0-1.42 2.94-2.13 4.4-2.13 1.07 0 2.92.39 3.84 1.15-1.17 2.92-4.01 5.09-7.450 5.09z"/></svg>
<div class="t" style="left:115.50px;top:510.15px;font-size:14px;line-height:14px;color:#616161;transform:scaleX(1.0662);">CVLT-SRE aswathaman</div>
<div class="t" style="left:523.20px;top:509.15px;font-size:14px;line-height:14px;color:#a940cc;transform:scaleX(1.1050);">View</div>
<div class="t" style="left:568.00px;top:509.15px;font-size:14px;line-height:14px;color:#555;transform:scaleX(1.0000);">|</div>
<div class="t" style="left:582.60px;top:509.15px;font-size:14px;line-height:14px;color:#a940cc;transform:scaleX(1.1238);">Edit</div>
<div class="t" style="left:735.50px;top:509.15px;font-size:14px;line-height:14px;color:#616161;transform:scaleX(1.0995);">Prospect</div>
<svg class="ic" style="left:964px;top:506px;width:22px;height:22px" viewBox="964 506 22 22"><circle cx="974.9" cy="515.95" r="8.3" fill="#a940cc"/><circle cx="975" cy="513.8" r="3" fill="#fff"/><path d="M969.9 520.9 Q975 516.6 980.05 520.9 Q975 524.2 969.9 520.9 Z" fill="#fff"/></svg>
<div class="t" style="left:990.50px;top:510.15px;font-size:14px;line-height:14px;color:#616161;transform:scaleX(1.1275);">Alex Kurtser Admin</div>
<div class="t" style="left:1282.50px;top:510.15px;font-size:14px;line-height:14px;color:#616161;transform:scaleX(1.1225);">3 days ago</div>
<div class="t" style="left:1506.80px;top:510.15px;font-size:14px;line-height:14px;color:#616161;transform:scaleX(1.1225);">3 days ago</div>
<div class="t" style="left:1722.50px;top:510.15px;font-size:14px;line-height:14px;color:#616161;transform:scaleX(1.1440);">2.0.0</div>
<svg class="ic" style="left:1871px;top:504px;width:24px;height:24px;" viewBox="0 0 24 24"><path fill="#444" d="M12 8c1.1 0 2-.9 2-2s-.9-2-2-2-2 .9-2 2 .9 2 2 2zm0 2c-1.1 0-2 .9-2 2s.9 2 2 2 2-.9 2-2-.9-2-2-2zm0 6c-1.1 0-2 .9-2 2s.9 2 2 2 2-.9 2-2-.9-2-2-2z"/></svg>
<div class="box" style="left:80px;top:570px;width:1818px;height:1px;background:#fafafa"></div>
<svg class="ic" style="left:89.9px;top:542px;width:20px;height:20px;" viewBox="0 0 24 24"><path fill="#a940cc" d="M12 2C6.48 2 2 6.48 2 12s4.48 10 10 10 10-4.48 10-10S17.52 2 12 2zm3.61 6.34c1.07 0 1.93.86 1.93 1.93 0 1.07-.86 1.93-1.93 1.93-1.07 0-1.93-.86-1.930-1.93-.01-1.07.86-1.93 1.93-1.93zm-6-1.58c1.3 0 2.36 1.06 2.36 2.36 0 1.3-1.06 2.36-2.36 2.36s-2.36-1.06-2.36-2.36c0-1.31 1.05-2.36 2.36-2.36zm0 9.13v3.75c-2.4-.75-4.3-2.6-5.14-4.96 1.05-1.12 3.670-1.69 5.14-1.69.53 0 1.2.08 1.9.22-1.64.87-1.9 2.02-1.9 2.68zM12 20c-.27 0-.53-.01-.79-.04v-4.07c0-1.42 2.94-2.13 4.4-2.13 1.07 0 2.92.39 3.84 1.15-1.17 2.92-4.01 5.09-7.450 5.09z"/></svg>
<div class="t" style="left:115.50px;top:546.15px;font-size:14px;line-height:14px;color:#616161;transform:scaleX(1.0498);">CVLT-SRE aswatha</div>
<div class="t" style="left:523.20px;top:545.15px;font-size:14px;line-height:14px;color:#a940cc;transform:scaleX(1.1050);">View</div>
<div class="t" style="left:568.00px;top:545.15px;font-size:14px;line-height:14px;color:#555;transform:scaleX(1.0000);">|</div>
<div class="t" style="left:582.60px;top:545.15px;font-size:14px;line-height:14px;color:#a940cc;transform:scaleX(1.1238);">Edit</div>
<div class="t" style="left:735.50px;top:545.15px;font-size:14px;line-height:14px;color:#616161;transform:scaleX(1.0995);">Prospect</div>
<svg class="ic" style="left:964px;top:542px;width:22px;height:22px" viewBox="964 542 22 22"><circle cx="974.9" cy="551.95" r="8.3" fill="#a940cc"/><circle cx="975" cy="549.8" r="3" fill="#fff"/><path d="M969.9 556.9 Q975 552.6 980.05 556.9 Q975 560.2 969.9 556.9 Z" fill="#fff"/></svg>
<div class="t" style="left:990.50px;top:546.15px;font-size:14px;line-height:14px;color:#616161;transform:scaleX(1.1275);">Alex Kurtser Admin</div>
<div class="t" style="left:1282.50px;top:546.15px;font-size:14px;line-height:14px;color:#616161;transform:scaleX(1.1225);">3 days ago</div>
<div class="t" style="left:1506.80px;top:546.15px;font-size:14px;line-height:14px;color:#616161;transform:scaleX(1.1225);">3 days ago</div>
<div class="t" style="left:1722.50px;top:546.15px;font-size:14px;line-height:14px;color:#616161;transform:scaleX(1.1440);">2.0.0</div>
<svg class="ic" style="left:1871px;top:540px;width:24px;height:24px;" viewBox="0 0 24 24"><path fill="#444" d="M12 8c1.1 0 2-.9 2-2s-.9-2-2-2-2 .9-2 2 .9 2 2 2zm0 2c-1.1 0-2 .9-2 2s.9 2 2 2 2-.9 2-2-.9-2-2-2zm0 6c-1.1 0-2 .9-2 2s.9 2 2 2 2-.9 2-2-.9-2-2-2z"/></svg>
<div class="box" style="left:80px;top:606px;width:1818px;height:1px;background:#fafafa"></div>
<svg class="ic" style="left:89.9px;top:578px;width:20px;height:20px;" viewBox="0 0 24 24"><path fill="#a940cc" d="M12 2C6.48 2 2 6.48 2 12s4.48 10 10 10 10-4.48 10-10S17.52 2 12 2zm3.61 6.34c1.07 0 1.93.86 1.93 1.93 0 1.07-.86 1.93-1.93 1.93-1.07 0-1.93-.86-1.930-1.93-.01-1.07.86-1.93 1.93-1.93zm-6-1.58c1.3 0 2.36 1.06 2.36 2.36 0 1.3-1.06 2.36-2.36 2.36s-2.36-1.06-2.36-2.36c0-1.31 1.05-2.36 2.36-2.36zm0 9.13v3.75c-2.4-.75-4.3-2.6-5.14-4.96 1.05-1.12 3.670-1.69 5.14-1.69.53 0 1.2.08 1.9.22-1.64.87-1.9 2.02-1.9 2.68zM12 20c-.27 0-.53-.01-.79-.04v-4.07c0-1.42 2.94-2.13 4.4-2.13 1.07 0 2.92.39 3.84 1.15-1.17 2.92-4.01 5.09-7.450 5.09z"/></svg>
<div class="t" style="left:115.50px;top:582.15px;font-size:14px;line-height:14px;color:#616161;transform:scaleX(1.0689);">CVLT-SRE boopathim</div>
<div class="t" style="left:523.20px;top:581.15px;font-size:14px;line-height:14px;color:#a940cc;transform:scaleX(1.1050);">View</div>
<div class="t" style="left:568.00px;top:581.15px;font-size:14px;line-height:14px;color:#555;transform:scaleX(1.0000);">|</div>
<div class="t" style="left:582.60px;top:581.15px;font-size:14px;line-height:14px;color:#a940cc;transform:scaleX(1.1238);">Edit</div>
<div class="t" style="left:735.50px;top:581.15px;font-size:14px;line-height:14px;color:#616161;transform:scaleX(1.0995);">Prospect</div>
<svg class="ic" style="left:964px;top:578px;width:22px;height:22px" viewBox="964 578 22 22"><circle cx="974.9" cy="587.95" r="8.3" fill="#a940cc"/><circle cx="975" cy="585.8" r="3" fill="#fff"/><path d="M969.9 592.9 Q975 588.6 980.05 592.9 Q975 596.2 969.9 592.9 Z" fill="#fff"/></svg>
<div class="t" style="left:990.50px;top:582.15px;font-size:14px;line-height:14px;color:#616161;transform:scaleX(1.1275);">Alex Kurtser Admin</div>
<div class="t" style="left:1282.50px;top:582.15px;font-size:14px;line-height:14px;color:#616161;transform:scaleX(1.1225);">3 days ago</div>
<div class="t" style="left:1506.80px;top:582.15px;font-size:14px;line-height:14px;color:#616161;transform:scaleX(1.1225);">3 days ago</div>
<div class="t" style="left:1722.50px;top:582.15px;font-size:14px;line-height:14px;color:#616161;transform:scaleX(1.1440);">2.0.0</div>
<svg class="ic" style="left:1871px;top:576px;width:24px;height:24px;" viewBox="0 0 24 24"><path fill="#444" d="M12 8c1.1 0 2-.9 2-2s-.9-2-2-2-2 .9-2 2 .9 2 2 2zm0 2c-1.1 0-2 .9-2 2s.9 2 2 2 2-.9 2-2-.9-2-2-2zm0 6c-1.1 0-2 .9-2 2s.9 2 2 2 2-.9 2-2-.9-2-2-2z"/></svg>
<div class="box" style="left:80px;top:642px;width:1818px;height:1px;background:#fafafa"></div>
<svg class="ic" style="left:89.9px;top:614px;width:20px;height:20px;" viewBox="0 0 24 24"><path fill="#a940cc" d="M12 2C6.48 2 2 6.48 2 12s4.48 10 10 10 10-4.48 10-10S17.52 2 12 2zm3.61 6.34c1.07 0 1.93.86 1.93 1.93 0 1.07-.86 1.93-1.93 1.93-1.07 0-1.93-.86-1.930-1.93-.01-1.07.86-1.93 1.93-1.93zm-6-1.58c1.3 0 2.36 1.06 2.36 2.36 0 1.3-1.06 2.36-2.36 2.36s-2.36-1.06-2.36-2.36c0-1.31 1.05-2.36 2.36-2.36zm0 9.13v3.75c-2.4-.75-4.3-2.6-5.14-4.96 1.05-1.12 3.670-1.69 5.14-1.69.53 0 1.2.08 1.9.22-1.64.87-1.9 2.02-1.9 2.68zM12 20c-.27 0-.53-.01-.79-.04v-4.07c0-1.42 2.94-2.13 4.4-2.13 1.07 0 2.92.39 3.84 1.15-1.17 2.92-4.01 5.09-7.450 5.09z"/></svg>
<div class="t" style="left:115.50px;top:618.15px;font-size:14px;line-height:14px;color:#616161;transform:scaleX(1.1053);">account-KHOe0wm</div>
<div class="t" style="left:523.20px;top:617.15px;font-size:14px;line-height:14px;color:#a940cc;transform:scaleX(1.1050);">View</div>
<div class="t" style="left:568.00px;top:617.15px;font-size:14px;line-height:14px;color:#555;transform:scaleX(1.0000);">|</div>
<div class="t" style="left:582.60px;top:617.15px;font-size:14px;line-height:14px;color:#a940cc;transform:scaleX(1.1238);">Edit</div>
<div class="t" style="left:735.50px;top:617.15px;font-size:14px;line-height:14px;color:#616161;transform:scaleX(1.0052);">E2E</div>
<svg class="ic" style="left:964px;top:614px;width:22px;height:22px" viewBox="964 614 22 22"><circle cx="974.9" cy="623.95" r="8.3" fill="#a940cc"/><circle cx="975" cy="621.8" r="3" fill="#fff"/><path d="M969.9 628.9 Q975 624.6 980.05 628.9 Q975 632.2 969.9 628.9 Z" fill="#fff"/></svg>
<div class="t" style="left:990.50px;top:618.15px;font-size:14px;line-height:14px;color:#616161;transform:scaleX(1.0839);">E2E Admin</div>
<div class="t" style="left:1282.50px;top:618.15px;font-size:14px;line-height:14px;color:#616161;transform:scaleX(1.1225);">4 days ago</div>
<div class="t" style="left:1506.80px;top:618.15px;font-size:14px;line-height:14px;color:#616161;transform:scaleX(1.1225);">4 days ago</div>
<div class="t" style="left:1722.50px;top:618.15px;font-size:14px;line-height:14px;color:#616161;transform:scaleX(1.1440);">1.0.0</div>
<svg class="ic" style="left:1871px;top:612px;width:24px;height:24px;" viewBox="0 0 24 24"><path fill="#444" d="M12 8c1.1 0 2-.9 2-2s-.9-2-2-2-2 .9-2 2 .9 2 2 2zm0 2c-1.1 0-2 .9-2 2s.9 2 2 2 2-.9 2-2-.9-2-2-2zm0 6c-1.1 0-2 .9-2 2s.9 2 2 2 2-.9 2-2-.9-2-2-2z"/></svg>
<div class="box" style="left:80px;top:678px;width:1818px;height:1px;background:#fafafa"></div>
<svg class="ic" style="left:89.9px;top:650px;width:20px;height:20px;" viewBox="0 0 24 24"><path fill="#a940cc" d="M12 2C6.48 2 2 6.48 2 12s4.48 10 10 10 10-4.48 10-10S17.52 2 12 2zm3.61 6.34c1.07 0 1.93.86 1.93 1.93 0 1.07-.86 1.93-1.93 1.93-1.07 0-1.93-.86-1.930-1.93-.01-1.07.86-1.93 1.93-1.93zm-6-1.58c1.3 0 2.36 1.06 2.36 2.36 0 1.3-1.06 2.36-2.36 2.36s-2.36-1.06-2.36-2.36c0-1.31 1.05-2.36 2.36-2.36zm0 9.13v3.75c-2.4-.75-4.3-2.6-5.14-4.96 1.05-1.12 3.670-1.69 5.14-1.69.53 0 1.2.08 1.9.22-1.64.87-1.9 2.02-1.9 2.68zM12 20c-.27 0-.53-.01-.79-.04v-4.07c0-1.42 2.94-2.13 4.4-2.13 1.07 0 2.92.39 3.84 1.15-1.17 2.92-4.01 5.09-7.450 5.09z"/></svg>
<div class="t" style="left:115.50px;top:654.15px;font-size:14px;line-height:14px;color:#a940cc;transform:scaleX(1.1199);">Satori Super Admin</div>
<div class="t" style="left:523.40px;top:653.15px;font-size:14px;line-height:14px;color:#616161;transform:scaleX(1.1238);">Edit</div>
<div class="t" style="left:561.90px;top:653.15px;font-size:14px;line-height:14px;color:#555;transform:scaleX(1.0000);">|</div>
<div class="t" style="left:576.40px;top:653.15px;font-size:14px;line-height:14px;color:#a940cc;transform:scaleX(1.0936);">Revoke</div>
<div class="t" style="left:735.50px;top:653.15px;font-size:14px;line-height:14px;color:#616161;transform:scaleX(1.1043);">Paid Customer</div>
<svg class="ic" style="left:964px;top:650px;width:22px;height:22px" viewBox="964 650 22 22"><circle cx="974.9" cy="659.95" r="8.3" fill="#a940cc"/><circle cx="975" cy="657.8" r="3" fill="#fff"/><path d="M969.9 664.9 Q975 660.6 980.05 664.9 Q975 668.2 969.9 664.9 Z" fill="#fff"/></svg>
<div class="t" style="left:990.50px;top:654.15px;font-size:14px;line-height:14px;color:#616161;transform:scaleX(1.0886);">Oleg Toubenshlak</div>
<div class="t" style="left:1282.50px;top:654.15px;font-size:14px;line-height:14px;color:#616161;transform:scaleX(1.1225);">7 days ago</div>
<div class="t" style="left:1506.80px;top:654.15px;font-size:14px;line-height:14px;color:#616161;transform:scaleX(1.1298);">Mar 12, 2020</div>
<div class="t" style="left:1722.50px;top:654.15px;font-size:14px;line-height:14px;color:#616161;transform:scaleX(1.1440);">1.0.0</div>
<svg class="ic" style="left:1871px;top:648px;width:24px;height:24px;" viewBox="0 0 24 24"><path fill="#444" d="M12 8c1.1 0 2-.9 2-2s-.9-2-2-2-2 .9-2 2 .9 2 2 2zm0 2c-1.1 0-2 .9-2 2s.9 2 2 2 2-.9 2-2-.9-2-2-2zm0 6c-1.1 0-2 .9-2 2s.9 2 2 2 2-.9 2-2-.9-2-2-2z"/></svg>
<div class="box" style="left:80px;top:714px;width:1818px;height:1px;background:#fafafa"></div>
<svg class="ic" style="left:89.9px;top:686px;width:20px;height:20px;" viewBox="0 0 24 24"><path fill="#a940cc" d="M12 2C6.48 2 2 6.48 2 12s4.48 10 10 10 10-4.48 10-10S17.52 2 12 2zm3.61 6.34c1.07 0 1.93.86 1.93 1.93 0 1.07-.86 1.93-1.93 1.93-1.07 0-1.93-.86-1.930-1.93-.01-1.07.86-1.93 1.93-1.93zm-6-1.58c1.3 0 2.36 1.06 2.36 2.36 0 1.3-1.06 2.36-2.36 2.36s-2.36-1.06-2.36-2.36c0-1.31 1.05-2.36 2.36-2.36zm0 9.13v3.75c-2.4-.75-4.3-2.6-5.14-4.96 1.05-1.12 3.670-1.69 5.14-1.69.53 0 1.2.08 1.9.22-1.64.87-1.9 2.02-1.9 2.68zM12 20c-.27 0-.53-.01-.79-.04v-4.07c0-1.42 2.94-2.13 4.4-2.13 1.07 0 2.92.39 3.84 1.15-1.17 2.92-4.01 5.09-7.450 5.09z"/></svg>
<div class="t" style="left:115.50px;top:690.15px;font-size:14px;line-height:14px;color:#616161;transform:scaleX(1.1448);">Arpit's stage account</div>
<div class="t" style="left:523.20px;top:689.15px;font-size:14px;line-height:14px;color:#a940cc;transform:scaleX(1.1050);">View</div>
<div class="t" style="left:568.00px;top:689.15px;font-size:14px;line-height:14px;color:#555;transform:scaleX(1.0000);">|</div>
<div class="t" style="left:582.60px;top:689.15px;font-size:14px;line-height:14px;color:#a940cc;transform:scaleX(1.1238);">Edit</div>
<div class="t" style="left:735.50px;top:689.15px;font-size:14px;line-height:14px;color:#616161;transform:scaleX(1.0995);">Prospect</div>
<svg class="ic" style="left:964px;top:686px;width:22px;height:22px" viewBox="964 686 22 22"><circle cx="974.9" cy="695.95" r="8.3" fill="#a940cc"/><circle cx="975" cy="693.8" r="3" fill="#fff"/><path d="M969.9 700.9 Q975 696.6 980.05 700.9 Q975 704.2 969.9 700.9 Z" fill="#fff"/></svg>
<div class="t" style="left:990.50px;top:690.15px;font-size:14px;line-height:14px;color:#616161;transform:scaleX(1.0886);">Oleg Toubenshlak</div>
<div class="t" style="left:1282.50px;top:690.15px;font-size:14px;line-height:14px;color:#616161;transform:scaleX(1.1459);">Nov 18, 2025</div>
<div class="t" style="left:1506.80px;top:690.15px;font-size:14px;line-height:14px;color:#616161;transform:scaleX(1.1459);">Nov 18, 2025</div>
<div class="t" style="left:1722.50px;top:690.15px;font-size:14px;line-height:14px;color:#616161;transform:scaleX(1.1440);">2.0.0</div>
<svg class="ic" style="left:1871px;top:684px;width:24px;height:24px;" viewBox="0 0 24 24"><path fill="#444" d="M12 8c1.1 0 2-.9 2-2s-.9-2-2-2-2 .9-2 2 .9 2 2 2zm0 2c-1.1 0-2 .9-2 2s.9 2 2 2 2-.9 2-2-.9-2-2-2zm0 6c-1.1 0-2 .9-2 2s.9 2 2 2 2-.9 2-2-.9-2-2-2z"/></svg>
<div class="box" style="left:80px;top:750px;width:1818px;height:1px;background:#fafafa"></div>
<svg class="ic" style="left:89.9px;top:722px;width:20px;height:20px;" viewBox="0 0 24 24"><path fill="#a940cc" d="M12 2C6.48 2 2 6.48 2 12s4.48 10 10 10 10-4.48 10-10S17.52 2 12 2zm3.61 6.34c1.07 0 1.93.86 1.93 1.93 0 1.07-.86 1.93-1.93 1.93-1.07 0-1.93-.86-1.930-1.93-.01-1.07.86-1.93 1.93-1.93zm-6-1.58c1.3 0 2.36 1.06 2.36 2.36 0 1.3-1.06 2.36-2.36 2.36s-2.36-1.06-2.36-2.36c0-1.31 1.05-2.36 2.36-2.36zm0 9.13v3.75c-2.4-.75-4.3-2.6-5.14-4.96 1.05-1.12 3.670-1.69 5.14-1.69.53 0 1.2.08 1.9.22-1.64.87-1.9 2.02-1.9 2.68zM12 20c-.27 0-.53-.01-.79-.04v-4.07c0-1.42 2.94-2.13 4.4-2.13 1.07 0 2.92.39 3.84 1.15-1.17 2.92-4.01 5.09-7.450 5.09z"/></svg>
<div class="t" style="left:115.50px;top:726.15px;font-size:14px;line-height:14px;color:#616161;transform:scaleX(1.1356);">Irena's stage account</div>
<div class="t" style="left:523.20px;top:725.15px;font-size:14px;line-height:14px;color:#a940cc;transform:scaleX(1.1050);">View</div>
<div class="t" style="left:568.00px;top:725.15px;font-size:14px;line-height:14px;color:#555;transform:scaleX(1.0000);">|</div>
<div class="t" style="left:582.60px;top:725.15px;font-size:14px;line-height:14px;color:#a940cc;transform:scaleX(1.1238);">Edit</div>
<div class="t" style="left:735.50px;top:725.15px;font-size:14px;line-height:14px;color:#616161;transform:scaleX(1.0995);">Prospect</div>
<svg class="ic" style="left:964px;top:722px;width:22px;height:22px" viewBox="964 722 22 22"><circle cx="974.9" cy="731.95" r="8.3" fill="#a940cc"/><circle cx="975" cy="729.8" r="3" fill="#fff"/><path d="M969.9 736.9 Q975 732.6 980.05 736.9 Q975 740.2 969.9 736.9 Z" fill="#fff"/></svg>
<div class="t" style="left:990.50px;top:726.15px;font-size:14px;line-height:14px;color:#616161;transform:scaleX(1.0886);">Oleg Toubenshlak</div>
<div class="t" style="left:1282.50px;top:726.15px;font-size:14px;line-height:14px;color:#616161;transform:scaleX(1.1459);">Nov 18, 2025</div>
<div class="t" style="left:1506.80px;top:726.15px;font-size:14px;line-height:14px;color:#616161;transform:scaleX(1.1459);">Nov 18, 2025</div>
<div class="t" style="left:1722.50px;top:726.15px;font-size:14px;line-height:14px;color:#616161;transform:scaleX(1.1440);">2.0.0</div>
<svg class="ic" style="left:1871px;top:720px;width:24px;height:24px;" viewBox="0 0 24 24"><path fill="#444" d="M12 8c1.1 0 2-.9 2-2s-.9-2-2-2-2 .9-2 2 .9 2 2 2zm0 2c-1.1 0-2 .9-2 2s.9 2 2 2 2-.9 2-2-.9-2-2-2zm0 6c-1.1 0-2 .9-2 2s.9 2 2 2 2-.9 2-2-.9-2-2-2z"/></svg>
<div class="t" style="left:1519.00px;top:766.15px;font-size:14px;line-height:14px;color:#616161;transform:scaleX(1.1104);">Rows per page:</div>
<div class="t" style="left:1637.00px;top:767.15px;font-size:14px;line-height:14px;color:#333;transform:scaleX(1.1440);">15</div>
<svg class="ic" style="left:1656px;top:765px;width:20px;height:16px;" viewBox="1656 765 20 16"><path d="M1661.2 772 H1670.6 L1665.9 776.8 Z" fill="#e6cdee"/></svg>
<div class="t" style="left:1711.00px;top:766.15px;font-size:14px;line-height:14px;color:#616161;transform:scaleX(1.1201);">1–15 of 165</div>
<svg class="ic" style="left:1826px;top:763px;width:20px;height:20px;" viewBox="1826 763 20 20"><path d="M1838.6 768.8 L1833.6 773.8 L1838.6 778.8" fill="none" stroke="#cccccc" stroke-width="1.8"/></svg>
<svg class="ic" style="left:1866px;top:763px;width:20px;height:20px;" viewBox="1866 763 20 20"><path d="M1873 768.8 L1878 773.8 L1873 778.8" fill="none" stroke="#333" stroke-width="2"/></svg>
</body></html>
